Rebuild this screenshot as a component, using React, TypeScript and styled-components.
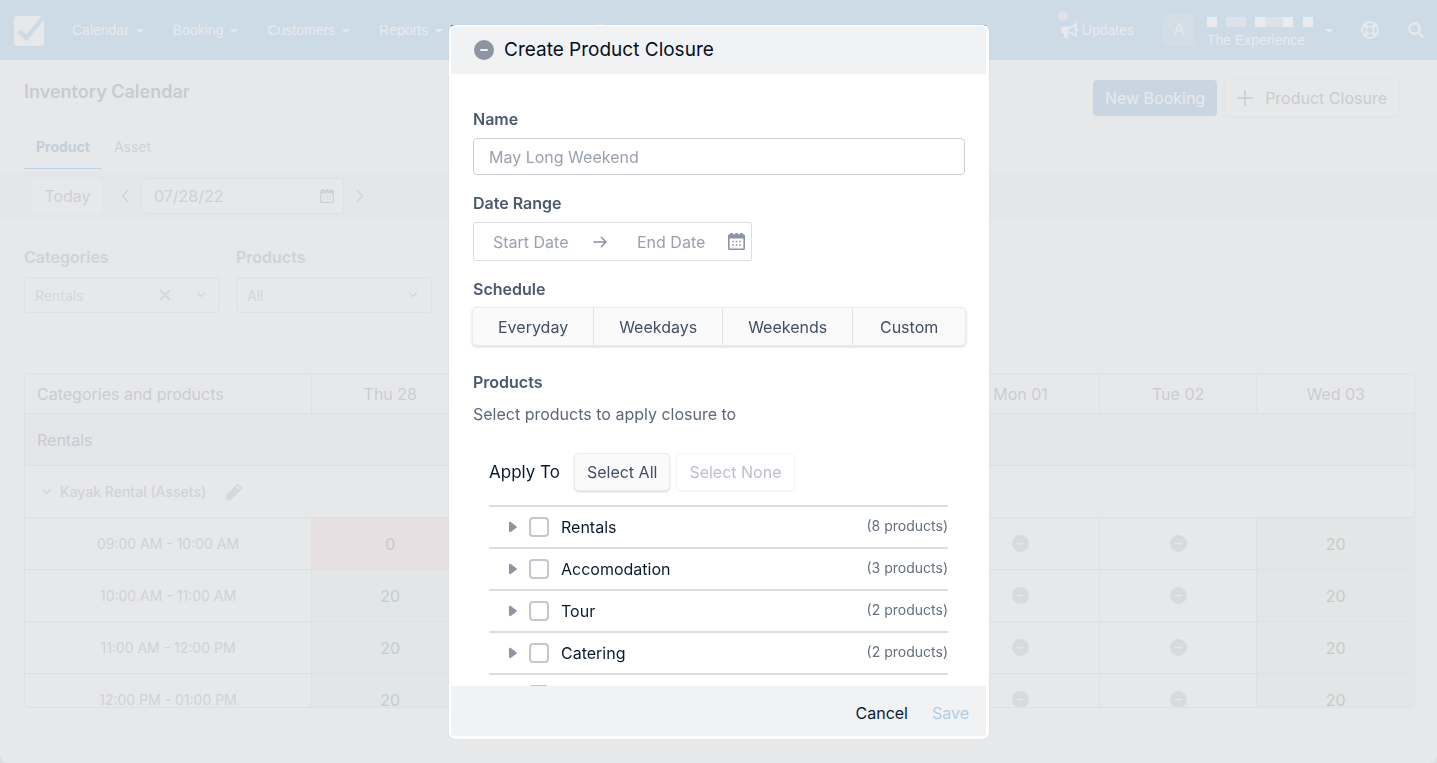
import React from "react";
import styled, { createGlobalStyle, css } from "styled-components";

const GlobalStyle = createGlobalStyle`
  *, *::before, *::after { box-sizing: border-box; }
  html { background: #dcdddf; }
  body { margin: 0; font-family: Inter, "Liberation Sans", sans-serif; font-size: 16px; }
  button, input, select { font: inherit; color: inherit; margin: 0; }
  h1, h2, p, ul { margin: 0; padding: 0; font-weight: inherit; }
`;

/* ---------- Page behind the dialog (dimmed palette) ---------- */

const Page = styled.div`
  display: flex;
  flex-direction: column;
  height: 100vh;
  min-height: 600px;
  background: #e7e8ea;
  border-radius: 0 0 8px 8px;
  overflow: hidden;
`;

const NavBar = styled.header`
  display: flex;
  align-items: center;
  flex: none;
  height: 60px;
  padding: 0 13px 0 14px;
  background: #cddbe6;
  color: #e6eaee;
  font-family: "Liberation Sans", Arial, sans-serif;
  font-size: 14px;
`;

const Logo = styled.a`
  display: flex;
  margin: 2px 28px 0 0;
`;

const NavLinks = styled.nav`
  display: flex;
  flex: 1;
  min-width: 0;
  gap: 29px;
`;

const NavItem = styled.button`
  display: flex;
  align-items: center;
  gap: 7px;
  padding: 0;
  border: 0;
  background: none;
  line-height: 20px;
  white-space: nowrap;
`;

const Caret = styled.span`
  border: 4px solid transparent;
  border-top-color: currentColor;
  border-bottom: 0;
  margin-top: 2px;
`;

const Updates = styled.a`
  position: relative;
  display: flex;
  align-items: center;
  gap: 4px;
  margin-right: 29px;
  color: inherit;
  text-decoration: none;
`;

const UpdatesDot = styled.span`
  position: absolute;
  top: -11px;
  left: -3px;
  width: 10px;
  height: 10px;
  border-radius: 50%;
  background: #dfe2e6;
`;

const Account = styled.button`
  display: flex;
  align-items: center;
  gap: 12px;
  margin-right: 28px;
  padding: 0;
  border: 0;
  background: none;
  text-align: left;
`;

const Avatar = styled.span`
  display: grid;
  place-items: center;
  width: 32px;
  height: 32px;
  border-radius: 4px;
  background: #d3dde6;
  font-size: 16px;
`;

const AccountText = styled.span`
  display: flex;
  flex-direction: column;
  gap: 4px;
  width: 106px;
  margin-top: 5px;
  line-height: 18px;
`;

const IconButton = styled.button`
  display: flex;
  padding: 0;
  border: 0;
  background: none;
`;

const NavTools = styled.div`
  display: flex;
  align-items: center;
  gap: 29px;
`;

const TitleRow = styled.div`
  display: flex;
  align-items: flex-start;
  justify-content: space-between;
  flex: none;
  height: 65px;
  padding: 20px 38px 0 24px;
`;

const PageTitle = styled.h1`
  font-size: 18px;
  line-height: 24px;
  font-weight: 600;
  color: #c9cbd1;
`;

const Actions = styled.div`
  display: flex;
  gap: 8px;
`;

const ActionButton = styled.button<{ $primary?: boolean }>`
  display: flex;
  align-items: center;
  gap: 12px;
  height: 36px;
  padding: 0 12px;
  border: 0;
  border-radius: 4px;
  white-space: nowrap;
  ${(p) =>
    p.$primary
      ? css`
          background: #c9d6e1;
          color: #e6eaee;
        `
      : css`
          background: #e7e8ea;
          color: #cacccf;
          box-shadow: 0 0 0 1px #e3e4e9, 0 1px 2px 1px #e3e4e9;
        `}
`;

const Tabs = styled.div`
  display: flex;
  flex: none;
  padding: 0 24px;
  height: 47px;
`;

const Tab = styled.button<{ $active?: boolean }>`
  height: 44px;
  padding: 0 12px;
  border: 0;
  border-bottom: 1px solid ${(p) => (p.$active ? "#b9d3e4" : "transparent")};
  background: none;
  font-size: 14px;
  color: ${(p) => (p.$active ? "#c3cfda" : "#cbd4dc")};
  font-weight: ${(p) => (p.$active ? 700 : 400)};
`;

const DateBar = styled.div`
  display: flex;
  align-items: center;
  flex: none;
  height: 48px;
  padding: 0 32px;
  background: #e5e6ea;
  color: #cfd1d5;
`;

const TodayButton = styled.button`
  height: 36px;
  width: 71px;
  margin-right: 18px;
  padding: 0;
  border: 0;
  border-radius: 4px;
  background: #e7e8ea;
  box-shadow: 0 0 0 1px #e2e4e8;
`;

const DateField = styled.div`
  display: flex;
  align-items: center;
  width: 203px;
  height: 36px;
  margin: 0 12px;
  padding: 0 9px 0 12px;
  border: 1px solid #dfe1e5;
  border-radius: 4px;
  background: #e7e8ea;
`;

const BareInput = styled.input`
  flex: 1;
  min-width: 0;
  width: 100%;
  padding: 0;
  border: 0;
  outline: 0;
  background: none;
  &::placeholder {
    color: #9aa1ad;
    opacity: 1;
  }
`;

const Filters = styled.div`
  display: flex;
  flex: none;
  gap: 16px;
  padding: 25px 24px 60px;
`;

const Filter = styled.div`
  display: flex;
  flex-direction: column;
  gap: 8px;
  width: 196px;
  color: #d5d7db;

  label {
    font-weight: 600;
    line-height: 24px;
    color: #cfd2d7;
  }
`;

const SelectBox = styled.div`
  display: flex;
  align-items: center;
  gap: 26px;
  height: 36px;
  padding: 0 13px 0 10px;
  border: 1px solid #dee0e4;
  border-radius: 4px;
  font-size: 14px;

  select {
    flex: 1;
    min-width: 0;
    appearance: none;
    border: 0;
    outline: 0;
    padding: 0;
    background: none;
  }
`;

const GridFrame = styled.div`
  flex: 1;
  min-height: 0;
  margin: 0 22px 55px 24px;
  border: 1px solid #dee0e4;
  border-radius: 4px;
  overflow: hidden;
`;

const Grid = styled.table`
  width: 100%;
  table-layout: fixed;
  border-collapse: separate;
  border-spacing: 0;
  color: #cacccf;

  th,
  td {
    height: 52px;
    padding: 0 12px;
    border-bottom: 1px solid #dee0e4;
    text-align: center;
    font-weight: 400;
  }
  thead th {
    height: 40px;
    color: #cbcdd2;
  }
  th:not(:first-child),
  td {
    border-left: 1px solid #dee0e4;
  }
  thead th:first-child {
    width: 286px;
    text-align: left;
  }
`;

const GroupHead = styled.th`
  && {
    text-align: left;
    background: #e5e6ea;
    color: #c9cbd0;
  }
`;

const ProductHead = styled.th`
  && {
    text-align: left;
    padding-left: 17px;
    font-size: 14px;
    font-weight: 500;
    color: #d1d3d8;
  }
  span {
    display: flex;
    align-items: center;
    gap: 8px;
  }
  button {
    margin-left: 12px;
  }
`;

const TimeHead = styled.th`
  font-size: 14px;
  color: #d0d2d6;
`;

const SlotCell = styled.td<{ $state: "open" | "full" | "closed" }>`
  ${(p) =>
    p.$state === "open" &&
    css`
      background: #e2e6e7;
      color: #c6ccca;
    `}
  ${(p) =>
    p.$state === "full" &&
    css`
      background: #e7e0e2;
      color: #d5c3c6;
    `}
  svg {
    display: block;
    margin: 0 auto;
  }
`;

/* ---------- Dialog ---------- */

const Overlay = styled.div`
  position: fixed;
  inset: 0;
  display: flex;
  align-items: center;
  justify-content: center;
  padding: 25px 0 24px 1px;
`;

const DialogBacking = styled.div`
  display: flex;
  width: 540px;
  max-width: 100%;
  max-height: 100%;
  background: linear-gradient(#2f6f9c, #2f6f9c) 2px 0 / 535px 3px no-repeat;
`;

const Dialog = styled.section`
  display: flex;
  flex-direction: column;
  flex: 1;
  min-width: 0;
  padding: 1px 3px 3px 2px;
  border-radius: 6px;
  background: #fff;
  box-shadow: 0 0 1px rgba(60, 80, 110, 0.25);
  color: #0b1a33;
`;

const DialogHeader = styled.header`
  display: flex;
  align-items: center;
  flex: none;
  gap: 10px;
  height: 48px;
  padding: 0 23px;
  border-radius: 5px 5px 0 0;
  background: #f1f2f4;

  h2 {
    font-size: 19px;
    line-height: 28px;
    color: #06101f;
  }
`;

const DialogBody = styled.div`
  flex: 1;
  min-height: 0;
  overflow-y: auto;
  scrollbar-width: none;
  padding: 33px 21px 24px 22px;
`;

const FieldLabel = styled.label`
  display: block;
  margin-bottom: 7px;
  font-size: 16px;
  line-height: 24px;
  font-weight: 600;
  color: #4a5870;
`;

const Field = styled.div<{ $last?: boolean }>`
  margin-bottom: ${(p) => (p.$last ? 25 : 16)}px;
`;

const TextInput = styled.input`
  display: block;
  width: 100%;
  height: 37px;
  padding: 0 15px;
  border: 1px solid #cfd1d4;
  border-radius: 4px;
  outline: 0;
  background: #fff;
  &::placeholder {
    color: #9aa1ad;
    opacity: 1;
  }
`;

const RangeBox = styled.div`
  display: flex;
  align-items: center;
  width: 279px;
  height: 39px;
  padding: 0 6px 0 19px;
  border: 1px solid #dcdde0;
  border-radius: 2px;
  color: #8b93a1;

  svg {
    flex: none;
  }
  input:first-of-type {
    flex: 0 0 100px;
  }
  input:last-of-type {
    margin-left: 30px;
  }
`;

const Segments = styled.div`
  display: flex;
  height: 37px;
  border-radius: 4px;
  background: #fafafb;
  box-shadow: 0 0 0 1px #ebecef, 0 1px 3px 1px #d3d6db;
`;

const Segment = styled.button`
  padding: 0 25px;
  border: 0;
  background: none;
  color: #414e63;
  & + & {
    border-left: 1px solid #e1e3e6;
  }
  &:last-child {
    flex: 1;
  }
`;

const Hint = styled.p`
  padding-top: 1px;
  line-height: 24px;
  color: #5b6779;
`;

const ApplyRow = styled.div`
  display: flex;
  align-items: center;
  gap: 8px;
  margin: 28px 0 15px;
  padding-left: 16px;

  span {
    margin-right: 7px;
    font-size: 17px;
  }
`;

const SelectButton = styled.button`
  height: 36px;
  padding: 0 12px;
  border: 0;
  border-radius: 4px;
  background: #fafafb;
  color: #414e63;
  box-shadow: 0 0 0 1px #ebecef, 0 1px 2px 1px #d3d6db;
  white-space: nowrap;
  &:disabled {
    background: #fff;
    color: #bcc0c8;
    box-shadow: 0 0 0 1px #f4f5f6, 0 1px 1px 1px #f1f2f4;
  }
`;

const ProductList = styled.ul`
  margin: 0 17px 0 16px;
  border-top: 2px solid #dcdddf;
  list-style: none;
`;

const ProductRow = styled.li`
  display: flex;
  align-items: center;
  height: 42px;
  padding-left: 20px;
  border-bottom: 2px solid #dcdddf;

  label {
    flex: 1;
    padding-left: 12px;
  }
`;

const Expander = styled.button`
  display: flex;
  margin-right: 12px;
  padding: 0;
  border: 0;
  background: none;
`;

const Checkbox = styled.input`
  appearance: none;
  width: 20px;
  height: 20px;
  margin: 0;
  border: 2px solid #c3c8cf;
  border-radius: 4px;
  background: #fff;
  &:checked {
    background: #2f80b9;
  }
`;

const Count = styled.span`
  margin-bottom: 4px;
  font-size: 14px;
  color: #646f80;
`;

const DialogFooter = styled.footer`
  display: flex;
  align-items: center;
  justify-content: flex-end;
  flex: none;
  gap: 24px;
  height: 50px;
  padding: 3px 17px 0;
  background: #f1f2f4;
`;

const TextButton = styled.button`
  padding: 0;
  border: 0;
  background: none;
  color: #0b1a33;
  &:disabled {
    color: #b3cee5;
  }
`;

/* ---------- Icons ---------- */

const LogoMark = () => (
  <svg width="30" height="30" viewBox="0 0 30 30" aria-hidden="true">
    <path
      fill="#e7e8ea"
      d="M3 0H27.6L12.4 18.2 6.8 13.8 3 16.2 12.6 25.6 30 3.4V27A3 3 0 0 1 27 30H3A3 3 0 0 1 0 27V3A3 3 0 0 1 3 0Z"
    />
  </svg>
);

const Megaphone = () => (
  <svg width="17" height="15" viewBox="0 0 576 512" fill="currentColor" aria-hidden="true">
    <path d="M576 240c0-23.600-12.950-44.040-32-55.120V32.010C544 23.260 537.020 0 512 0c-7.120 0-14.190 2.380-19.980 7.020l-85.030 68.030C364.280 109.190 310.660 128 256 128H64c-35.350 0-64 28.650-64 64v96c0 35.350 28.650 64 64 64h33.700c-1.390 10.480-2.180 21.140-2.180 32 0 39.770 9.260 77.350 25.560 110.940 5.190 10.690 16.520 17.060 28.400 17.060h74.280c26.050 0 41.690-29.840 25.900-50.560-16.400-21.520-26.150-48.360-26.150-77.440 0-11.110 1.620-21.790 4.410-32H256c54.660 0 108.280 18.810 150.980 52.950l85.030 68.030a32.023 32.023 0 0 0 19.980 7.020c24.920 0 32-22.780 32-32V295.130C563.050 284.040 576 263.600 576 240zm-96 141.420l-33.050-26.440C392.950 311.780 325.120 288 256 288v-96c69.120 0 136.950-23.780 190.950-66.980L480 98.580v282.840z" />
  </svg>
);

const Pixels = () => (
  <svg width="106" height="10" viewBox="0 0 106 10" aria-hidden="true">
    <path fill="#e9ebee" d="M0 0h10v10H0zM48 0h10v10H48zM76 0h10v10H76zM96 0h10v10H96z" />
    <path fill="#dde2e8" d="M19 0h20v10H19zM58 0h18v10H58z" />
  </svg>
);

const LifeRing = () => (
  <svg width="18" height="18" viewBox="0 0 18 18" fill="none" stroke="currentColor" aria-hidden="true">
    <circle cx="9" cy="9" r="8" strokeWidth="2" />
    <circle cx="9" cy="9" r="3.600" strokeWidth="1.500" />
    <path strokeWidth="3" d="M3.500 3.500 6.400 6.400M14.500 3.500 11.600 6.400M3.500 14.500 6.400 11.600M14.500 14.500 11.600 11.600" />
  </svg>
);

const SearchGlyph = () => (
  <svg width="16" height="16" viewBox="0 0 16 16" fill="none" stroke="currentColor" strokeWidth="2.200" strokeLinecap="round" aria-hidden="true">
    <circle cx="6.500" cy="6.500" r="5.200" />
    <path d="M10.400 10.400 14.600 14.600" />
  </svg>
);

const Plus = () => (
  <svg width="16" height="16" viewBox="0 0 16 16" stroke="#c9cbcf" strokeWidth="1.500" strokeLinecap="round" aria-hidden="true">
    <path d="M8 .8V15.200M.8 8H15.200" />
  </svg>
);

const Chevron = ({ d, w, h }: { d: string; w: number; h: number }) => (
  <svg width={w} height={h} viewBox={`0 0 ${w} ${h}`} fill="none" stroke="currentColor" strokeWidth="1.200" strokeLinecap="round" strokeLinejoin="round" aria-hidden="true">
    <path d={d} />
  </svg>
);
const ChevronLeft = () => <Chevron w={8} h={12} d="M6.500 1 1.500 6 6.500 11" />;
const ChevronRight = () => <Chevron w={8} h={12} d="M1.500 1 6.500 6 1.500 11" />;
const ChevronDown = () => <Chevron w={10} h={6} d="M1.500 1 5 4.500 8.500 1" />;

const Cross = () => (
  <svg width="10" height="10" viewBox="0 0 10 10" stroke="currentColor" strokeWidth="2" strokeLinecap="round" aria-hidden="true">
    <path d="M1 1 9 9M9 1 1 9" />
  </svg>
);

const Pencil = () => (
  <svg width="16" height="16" viewBox="0 0 16 16" fill="#d5d8dc" aria-hidden="true">
    <path
      fillRule="evenodd"
      d="M0 16V11L10.400 .8a2.200 2.200 0 0 1 3.100 0L15.200 2.500a2.200 2.200 0 0 1 0 3.100L5 16ZM10.400 3.200 12.800 5.600 13.900 4.500 11.500 2.100Z"
    />
  </svg>
);

const CalendarGlyph = ({ size }: { size: number }) => (
  <svg width={size} height={size} viewBox="0 0 17 17" fill="currentColor" aria-hidden="true">
    <path
      fillRule="evenodd"
      d="M1.500 1.200H2.200V0H4.800V1.200H7.200V0H9.800V1.200H12.200V0H14.800V1.200H15.500A1.500 1.500 0 0 1 17 2.700V15.500A1.500 1.500 0 0 1 15.500 17H1.500A1.500 1.500 0 0 1 0 15.500V2.700A1.500 1.500 0 0 1 1.500 1.200ZM1.600 5.500V15.400H15.400V5.500Z"
    />
    <path d="M4.300 7.800h1.600v1.500H4.300zM7.700 7.800h1.600v1.500H7.700zM11.100 7.800h1.600v1.500h-1.600zM4.300 11.200h1.600v1.500H4.300zM7.700 11.200h1.600v1.500H7.700zM11.100 11.200h1.600v1.500h-1.600z" />
  </svg>
);

const MinusCircle = ({ size, fill, bar }: { size: number; fill: string; bar: string }) => (
  <svg width={size} height={size} viewBox="0 0 20 20" aria-hidden="true">
    <circle cx="10" cy="10" r="10" fill={fill} />
    <rect x="6" y="9" width="8" height="2" rx="1" fill={bar} />
  </svg>
);

const ArrowRight = () => (
  <svg width="14" height="12" viewBox="0 0 14 12" fill="none" stroke="currentColor" strokeWidth="1.500" strokeLinecap="round" strokeLinejoin="round" aria-hidden="true">
    <path d="M1 6H13M8.300 1.200 13 6 8.300 10.800" />
  </svg>
);

const Triangle = () => (
  <svg width="8" height="12" viewBox="0 0 8 12" aria-hidden="true">
    <path fill="#8d95a2" d="M0 2.200C0 .9 1.200.4 2.100 1.200L7.400 5.200a1 1 0 0 1 0 1.600L2.100 10.800C1.200 11.600 0 11.100 0 9.800Z" />
  </svg>
);

/* ---------- Data ---------- */

const menus = ["Calendar", "Booking", "Customers", "Reports", "Inventory", "Staff"];
const days = ["Thu 28", "Fri 29", "Sat 30", "Sun 31", "Mon 01", "Tue 02", "Wed 03"];
const closedDays = ["Mon 01", "Tue 02"];
const slots = [
  "09:00 AM - 10:00 AM",
  "10:00 AM - 11:00 AM",
  "11:00 AM - 12:00 PM",
  "12:00 PM - 01:00 PM",
];
const schedules = ["Everyday", "Weekdays", "Weekends", "Custom"];
const groups = [
  { name: "Rentals", count: 8 },
  { name: "Accomodation", count: 3 },
  { name: "Tour", count: 2 },
  { name: "Catering", count: 2 },
  { name: "Transfers", count: 1 },
];

const slotState = (row: number, day: string) => {
  if (closedDays.includes(day)) return "closed" as const;
  return row === 0 && day === days[0] ? ("full" as const) : ("open" as const);
};

const InventoryPage = () => (
  <Page>
    <NavBar>
      <Logo href="#" aria-label="Home">
        <LogoMark />
      </Logo>
      <NavLinks>
        {menus.map((m) => (
          <NavItem key={m}>
            {m}
            <Caret />
          </NavItem>
        ))}
      </NavLinks>
      <Updates href="#">
        <UpdatesDot />
        <Megaphone />
        Updates
      </Updates>
      <Account>
        <Avatar>A</Avatar>
        <AccountText>
          <Pixels />
          The Experience
        </AccountText>
        <Caret />
      </Account>
      <NavTools>
        <IconButton aria-label="Help">
          <LifeRing />
        </IconButton>
        <IconButton aria-label="Search">
          <SearchGlyph />
        </IconButton>
      </NavTools>
    </NavBar>

    <TitleRow>
      <PageTitle>Inventory Calendar</PageTitle>
      <Actions>
        <ActionButton $primary>New Booking</ActionButton>
        <ActionButton>
          <Plus />
          Product Closure
        </ActionButton>
      </Actions>
    </TitleRow>

    <Tabs>
      <Tab $active>Product</Tab>
      <Tab>Asset</Tab>
    </Tabs>

    <DateBar>
      <TodayButton>Today</TodayButton>
      <IconButton aria-label="Previous day">
        <ChevronLeft />
      </IconButton>
      <DateField>
        <BareInput aria-label="Date" defaultValue="07/28/22" />
        <CalendarGlyph size={14} />
      </DateField>
      <IconButton aria-label="Next day">
        <ChevronRight />
      </IconButton>
    </DateBar>

    <Filters>
      <Filter>
        <label htmlFor="filter-categories">Categories</label>
        <SelectBox>
          <select id="filter-categories">
            <option>Rentals</option>
          </select>
          <IconButton aria-label="Clear categories">
            <Cross />
          </IconButton>
          <ChevronDown />
        </SelectBox>
      </Filter>
      <Filter>
        <label htmlFor="filter-products">Products</label>
        <SelectBox>
          <select id="filter-products">
            <option>All</option>
          </select>
          <ChevronDown />
        </SelectBox>
      </Filter>
    </Filters>

    <GridFrame>
      <Grid>
        <thead>
          <tr>
            <th>Categories and products</th>
            {days.map((d) => (
              <th key={d}>{d}</th>
            ))}
          </tr>
        </thead>
        <tbody>
          <tr>
            <GroupHead colSpan={8}>Rentals</GroupHead>
          </tr>
          <tr>
            <ProductHead colSpan={8}>
              <span>
                <ChevronDown />
                Kayak Rental (Assets)
                <IconButton aria-label="Edit product">
                  <Pencil />
                </IconButton>
              </span>
            </ProductHead>
          </tr>
          {slots.map((slot, row) => (
            <tr key={slot}>
              <TimeHead>{slot}</TimeHead>
              {days.map((day) => {
                const state = slotState(row, day);
                return (
                  <SlotCell key={day} $state={state}>
                    {state === "closed" ? (
                      <MinusCircle size={17} fill="#d8dade" bar="#e7e8ea" />
                    ) : state === "full" ? (
                      0
                    ) : (
                      20
                    )}
                  </SlotCell>
                );
              })}
            </tr>
          ))}
        </tbody>
      </Grid>
    </GridFrame>
  </Page>
);

const ClosureDialog = () => (
  <Overlay>
    <DialogBacking>
      <Dialog role="dialog" aria-modal="true" aria-labelledby="closure-title">
        <DialogHeader>
          <MinusCircle size={20} fill="#8d95a2" bar="#f1f2f4" />
          <h2 id="closure-title">Create Product Closure</h2>
        </DialogHeader>
        <DialogBody>
          <Field>
            <FieldLabel htmlFor="closure-name">Name</FieldLabel>
            <TextInput id="closure-name" placeholder="May Long Weekend" />
          </Field>
          <Field>
            <FieldLabel htmlFor="closure-start">Date Range</FieldLabel>
            <RangeBox>
              <BareInput id="closure-start" placeholder="Start Date" />
              <ArrowRight />
              <BareInput aria-label="End date" placeholder="End Date" />
              <CalendarGlyph size={17} />
            </RangeBox>
          </Field>
          <Field $last>
            <FieldLabel as="div" id="closure-schedule">
              Schedule
            </FieldLabel>
            <Segments role="group" aria-labelledby="closure-schedule">
              {schedules.map((s) => (
                <Segment key={s}>{s}</Segment>
              ))}
            </Segments>
          </Field>
          <FieldLabel as="div">Products</FieldLabel>
          <Hint>Select products to apply closure to</Hint>
          <ApplyRow>
            <span>Apply To</span>
            <SelectButton>Select All</SelectButton>
            <SelectButton disabled>Select None</SelectButton>
          </ApplyRow>
          <ProductList>
            {groups.map((g) => (
              <ProductRow key={g.name}>
                <Expander aria-label={`Expand ${g.name}`}>
                  <Triangle />
                </Expander>
                <Checkbox type="checkbox" id={`group-${g.name}`} />
                <label htmlFor={`group-${g.name}`}>{g.name}</label>
                <Count>({g.count} products)</Count>
              </ProductRow>
            ))}
          </ProductList>
        </DialogBody>
        <DialogFooter>
          <TextButton>Cancel</TextButton>
          <TextButton disabled>Save</TextButton>
        </DialogFooter>
      </Dialog>
    </DialogBacking>
  </Overlay>
);

export default function App() {
  return (
    <>
      <GlobalStyle />
      <InventoryPage />
      <ClosureDialog />
    </>
  );
}
